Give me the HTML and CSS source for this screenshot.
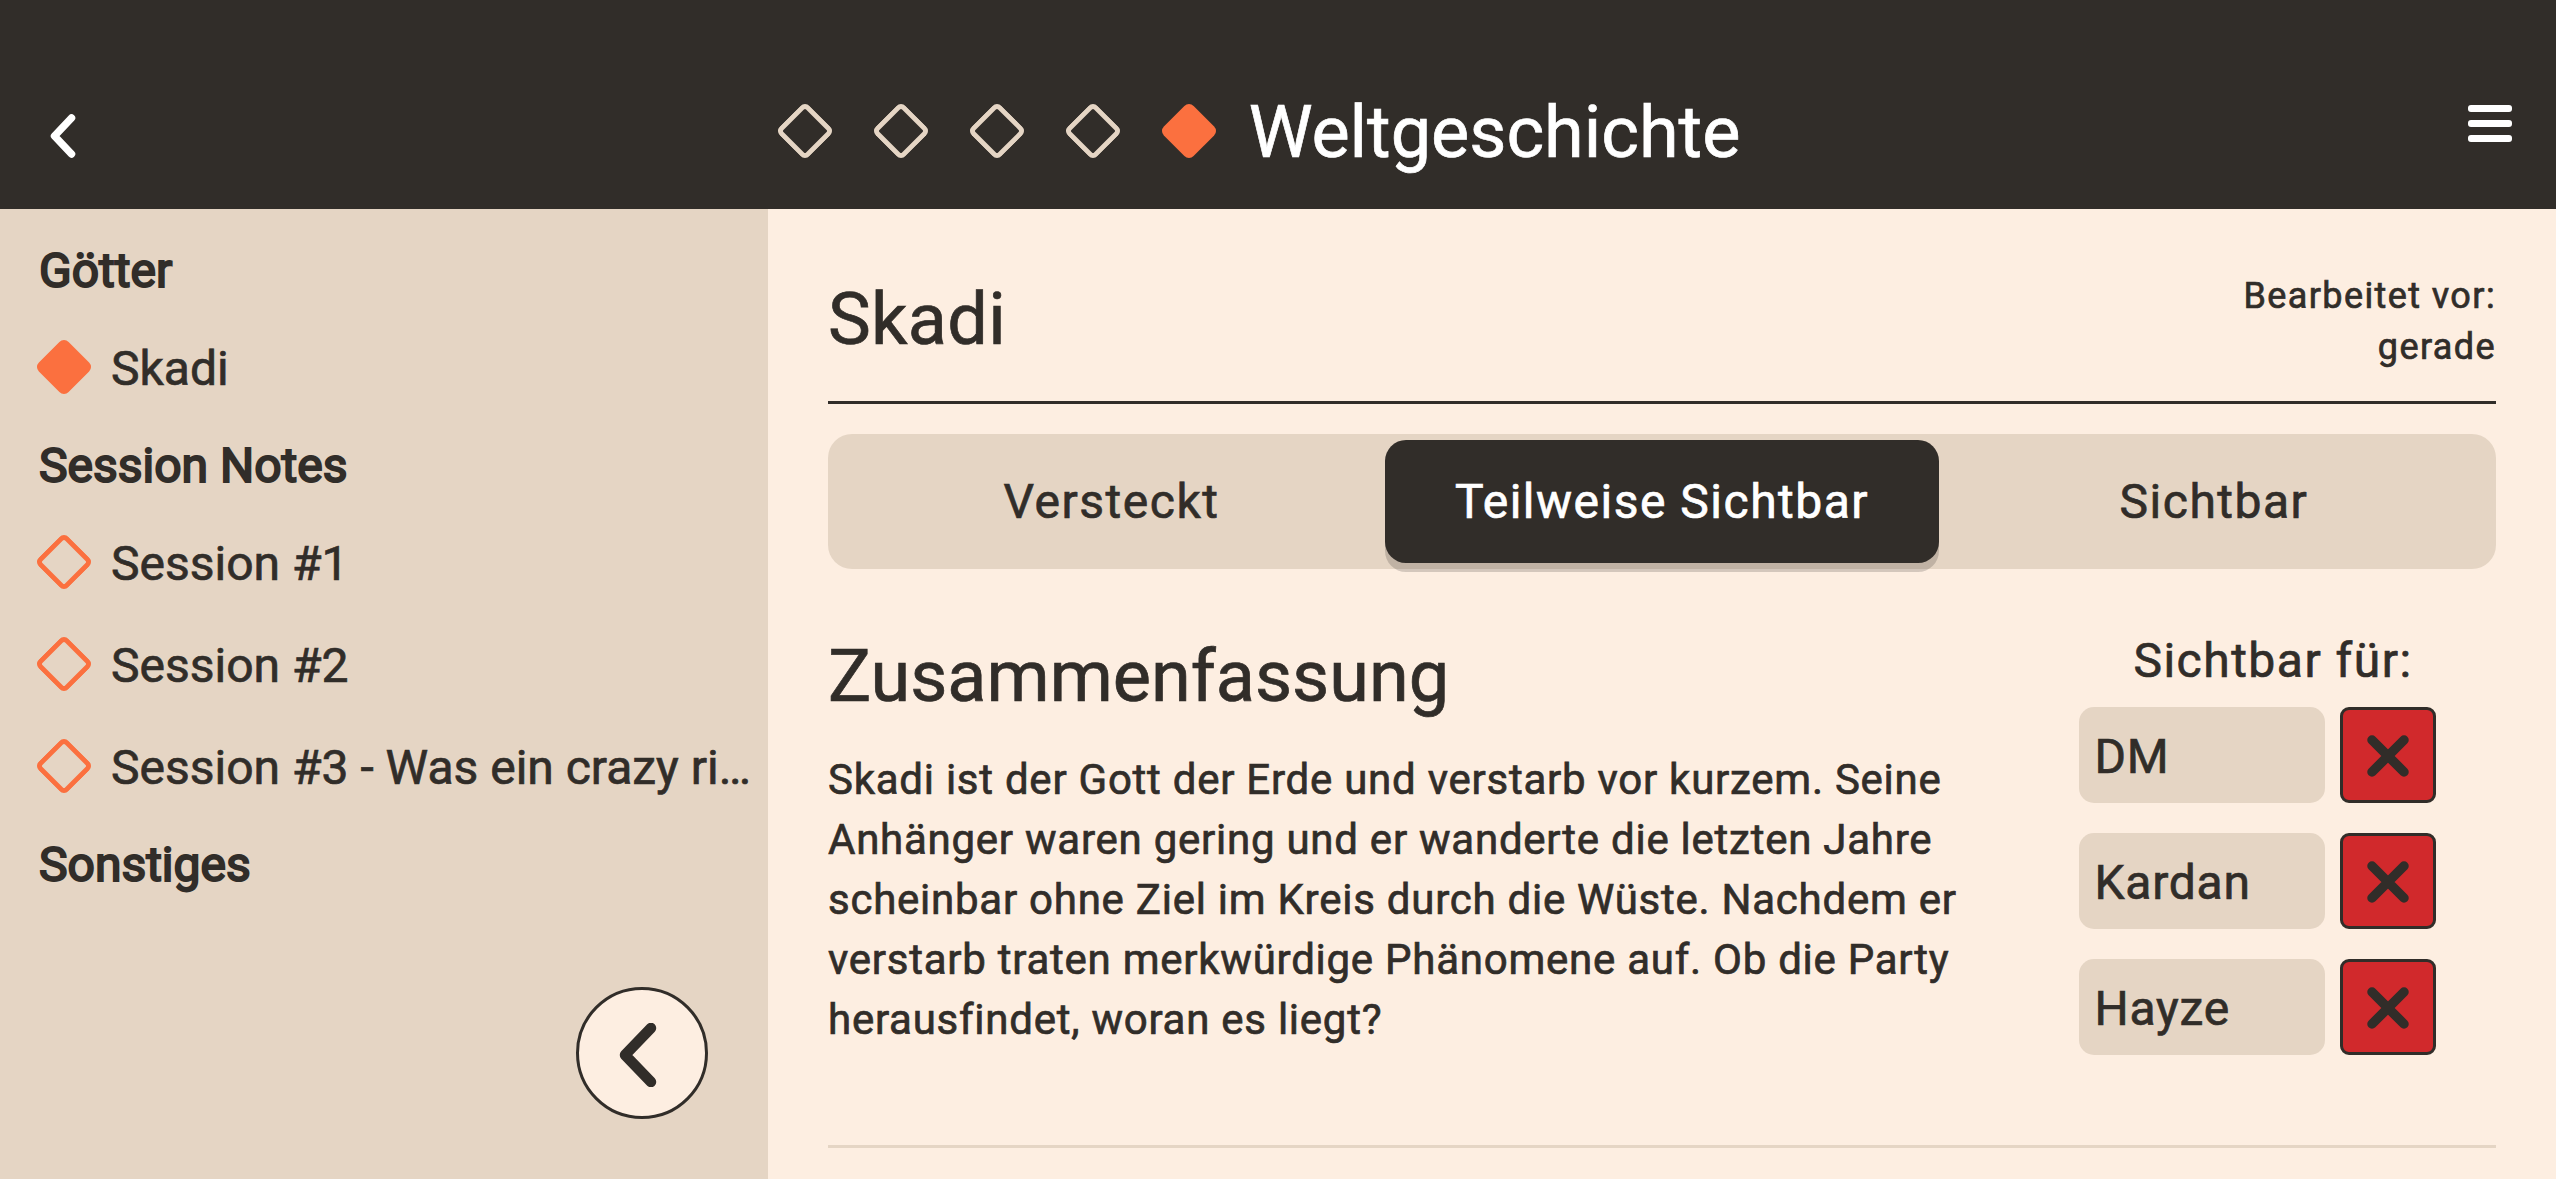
FILE: index.html
```html
<!DOCTYPE html>
<html lang="de">
<head>
<meta charset="utf-8">
<title>Weltgeschichte</title>
<link rel="stylesheet" href="styles.css">
</head>
<body>
<header class="topbar">
  <svg class="back" viewBox="0 0 30 46" aria-hidden="true"><path d="M23.5 5 L6.5 23 L23.5 41"/></svg>
  <div class="heading">
    <i class="gem"></i><i class="gem"></i><i class="gem"></i><i class="gem"></i><i class="gem full"></i>
    <h1>Weltgeschichte</h1>
  </div>
  <div class="menu"><i></i><i></i><i></i></div>
</header>
<div class="body">
  <nav class="sidebar">
    <h2>Götter</h2>
    <a class="item"><i class="gem full"></i><span>Skadi</span></a>
    <h2>Session Notes</h2>
    <a class="item"><i class="gem open"></i><span>Session #1</span></a>
    <a class="item"><i class="gem open"></i><span>Session #2</span></a>
    <a class="item"><i class="gem open"></i><span>Session #3 - Was ein crazy ri…</span></a>
    <h2>Sonstiges</h2>
    <div class="fab"><svg viewBox="0 0 38 64" aria-hidden="true"><path d="M32 5 L6 32 L32 59"/></svg></div>
  </nav>
  <main class="content">
    <div class="title-row">
      <h3>Skadi</h3>
      <p class="edited">Bearbeitet vor:<br>gerade</p>
    </div>
    <div class="segments">
      <div>Versteckt</div><div class="active">Teilweise Sichtbar</div><div>Sichtbar</div>
    </div>
    <div class="columns">
      <section class="summary">
        <h3>Zusammenfassung</h3>
        <p>Skadi ist der Gott der Erde und verstarb vor kurzem. Seine<br>Anhänger waren gering und er wanderte die letzten Jahre<br>scheinbar ohne Ziel im Kreis durch die Wüste. Nachdem er<br>verstarb traten merkwürdige Phänomene auf. Ob die Party<br>herausfindet, woran es liegt?</p>
      </section>
      <section class="visible">
        <h4>Sichtbar für:</h4>
        <div class="person"><span>DM</span><b><svg viewBox="0 0 42 42"><path d="M5 5 L37 37 M37 5 L5 37"/></svg></b></div>
        <div class="person"><span>Kardan</span><b><svg viewBox="0 0 42 42"><path d="M5 5 L37 37 M37 5 L5 37"/></svg></b></div>
        <div class="person"><span>Hayze</span><b><svg viewBox="0 0 42 42"><path d="M5 5 L37 37 M37 5 L5 37"/></svg></b></div>
      </section>
    </div>
  </main>
</div>
</body>
</html>
```
FILE: styles.css
```css
* { box-sizing: border-box; margin: 0; padding: 0; }
body {
  width: 2556px; height: 1179px; overflow: hidden;
  display: flex; flex-direction: column;
  background: #fdeee1; color: #312d29;
  font-family: Roboto, "Liberation Sans", sans-serif; font-size: 48px;
  -webkit-text-stroke: .7px currentColor;
}
h1, h3, h4 { font-weight: 400; }
svg { display: block; fill: none; stroke-linecap: round; stroke-linejoin: round; }

.topbar {
  height: 209px; flex: none; background: #312d29; color: #fff;
  display: flex; justify-content: space-between; align-items: flex-start;
  padding: 0 44px 0 48px;
}
.back { width: 30px; height: 46px; margin-top: 113px; stroke: #fff; stroke-width: 7.5; }
.heading { display: flex; align-items: center; height: 84px; margin: 89px 0 0 -22px; }
.heading h1 { font-size: 72px; line-height: 84px; margin-left: -2px; padding-top: 4px; }
.heading .gem { margin-right: 54px; }
.heading .gem.full { margin-right: 41px; }
.menu { width: 44px; margin-top: 105px; display: grid; gap: 8px; }
.menu i { height: 7px; border-radius: 3px; background: #fff; }

.gem {
  width: 42px; height: 42px; flex: none; transform: rotate(45deg);
  box-shadow: inset 0 0 0 5px #e5d5c4; border-radius: 6.5px;
}
.gem.full { background: #fb703f; box-shadow: none; }
.gem.open { box-shadow: inset 0 0 0 5px #fb703f; }

.body { flex: 1; display: flex; min-height: 0; }
.sidebar { width: 768px; background: #e5d5c4; padding: 15px 0 0 39px; position: relative; }
.sidebar h2 { font-size: 48px; font-weight: 400; line-height: 93px; -webkit-text-stroke-width: 2px; }
.item { display: flex; align-items: center; height: 102px; padding-left: 4px; }
.item .gem { margin-bottom: 2px; }
.item span { margin-left: 26px; white-space: nowrap; }
.fab {
  position: absolute; right: 60px; bottom: 60px; width: 132px; height: 132px;
  border: 3px solid #312d29; border-radius: 50%; background: #fdeee1;
}
.fab svg { width: 38px; height: 64px; margin: 33px 0 0 39.5px; stroke: #312d29; stroke-width: 10.5; }

.content { flex: 1; padding: 0 60px; letter-spacing: 1.5px; }
.title-row { height: 195px; border-bottom: 3px solid #312d29; display: flex; justify-content: space-between; padding-top: 62px; }
h3 { font-size: 72px; line-height: 98px; letter-spacing: 0; }
.title-row h3 { letter-spacing: .3px; }
.edited { font-size: 36px; line-height: 51px; text-align: right; letter-spacing: 1.4px; }
.segments {
  height: 135px; margin-top: 30px; padding: 6px; border-radius: 24px; background: #e5d5c4;
  display: grid; grid-template-columns: repeat(3, 1fr); text-align: center; line-height: 123px;
}
.segments div:first-child { padding-left: 3px; }
.segments .active { background: #312d29; color: #fff; border-radius: 21px; box-shadow: 0 9px 0 rgba(0, 0, 0, .16); margin: 0 -1px; }
.columns { height: 579px; display: flex; justify-content: space-between; border-bottom: 3px solid #e5d5c4; padding: 58px 60px 0 0; }
.summary h3 { line-height: 99px; }
.summary p { font-size: 42px; line-height: 60px; margin-top: 24px; white-space: nowrap; letter-spacing: .75px; }
.visible { width: 357px; }
.visible h4 { font-size: 48px; line-height: 67px; text-align: center; padding-left: 31px; margin-bottom: 13px; }
.person { display: flex; justify-content: space-between; height: 96px; margin-bottom: 30px; }
.person span { width: 246px; padding-left: 15.5px; border-radius: 15px; background: #e5d5c4; line-height: 99px; letter-spacing: .75px; }
.person b { width: 96px; border: 3px solid #312d29; border-radius: 9px; background: #d1292c; padding: 25px 24px; }
.person svg { width: 42px; height: 42px; stroke: #312d29; stroke-width: 9.5; }
```
